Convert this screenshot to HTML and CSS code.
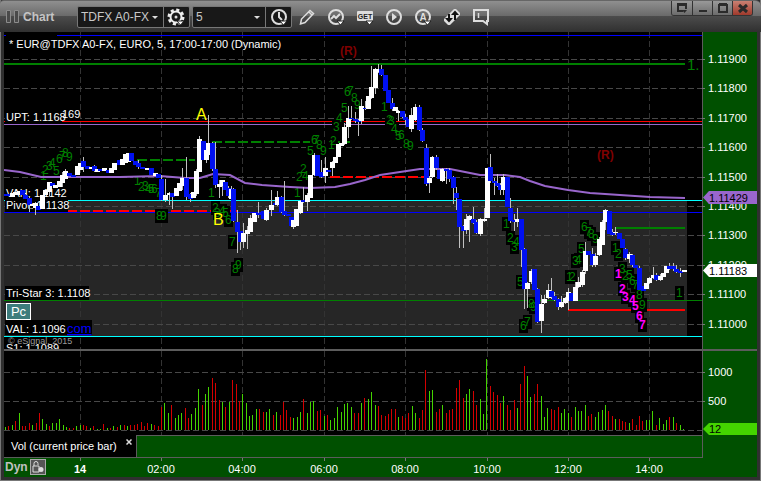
FILE: index.html
```html
<!DOCTYPE html>
<html lang="en">
<head>
    <meta charset="UTF-8">
    <meta name="viewport" content="width=device-width, initial-scale=1.0">
    <title>Chart</title>
    <link rel="stylesheet" href="styles.css">
</head>
<body>

    <div class="window">
        <header class="titlebar">
            <svg class="grip" width="14" height="14" viewBox="0 0 14 14"><path d="M.5.5h4v12h-4zM8.5.5h4v12h-4z"/></svg>
            <h1>Chart</h1>

            <div class="group symbol-group">
                <div class="picker">
                    <select aria-label="Symbol"><option>TDFX A0-FX</option></select>
                </div>
                <button type="button" aria-label="Symbol settings">
                    <svg width="20" height="20" viewBox="0 0 20 20">
                        <circle class="gear-teeth" cx="9" cy="10" r="7"/>
                        <circle class="gear-ring" cx="9" cy="10" r="5.5"/>
                        <circle class="solid" cx="9" cy="10" r="1.5"/>
                        <path class="drop" d="M10 14h7l-3.500 4z"/>
                    </svg>
                </button>
            </div>

            <div class="group interval-group">
                <div class="picker">
                    <select aria-label="Interval"><option>5</option></select>
                </div>
                <button type="button" aria-label="Time template">
                    <svg width="20" height="20" viewBox="0 0 20 20">
                        <circle class="ring" cx="10" cy="10" r="7"/>
                        <path class="ring" d="M10 5v5l3 3"/>
                        <path class="drop" d="M11 14h7l-3.500 4z"/>
                    </svg>
                </button>
            </div>

            <nav class="tools">
                <button type="button" aria-label="Draw">
                    <svg width="20" height="20" viewBox="0 0 20 20"><path class="ring thin" d="M3.500 17l1-5L13 3.500l3.500 3L8 15.500zM12 5l3 3"/></svg>
                </button>
                <button type="button" aria-label="Studies">
                    <svg width="20" height="20" viewBox="0 0 20 20">
                        <circle class="ring" cx="10" cy="10" r="7"/>
                        <path class="ring" d="M5 12l3-3 2 2 4-4"/>
                        <path class="drop" d="M11 14h7l-3.500 4z"/>
                    </svg>
                </button>
                <button type="button" aria-label="Get studies">
                    <svg width="20" height="20" viewBox="0 0 20 20">
                        <rect class="solid" x="2" y="4" width="16" height="10" rx="1"/>
                        <text class="get" x="10" y="12">GET</text>
                        <path class="drop" d="M11 14h7l-3.500 4z"/>
                    </svg>
                </button>
                <button type="button" aria-label="Play">
                    <svg width="20" height="20" viewBox="0 0 20 20"><circle class="ring" cx="10" cy="10" r="7"/><path class="solid" d="M8 6l5 4-5 4z"/></svg>
                </button>
                <button type="button" aria-label="Automatic">
                    <svg width="20" height="20" viewBox="0 0 20 20">
                        <circle class="ring" cx="10" cy="10" r="7"/>
                        <text class="auto" x="10" y="14">A</text>
                        <path class="drop" d="M11 14h7l-3.500 4z"/>
                    </svg>
                </button>
                <button type="button" aria-label="Trade">
                    <svg width="20" height="20" viewBox="0 0 20 20">
                        <path class="solid" d="M2 12L12 2h2l4 4v2L8 18H6l-4-4z"/>
                        <path class="dark" d="M6 7h2v4h3l-4 4.500L3 11h3zM12 13h2V8h3l-4-4.500L9 8h3z"/>
                    </svg>
                </button>
                <button type="button" aria-label="Notes">
                    <svg width="20" height="20" viewBox="0 0 20 20"><path class="ring" d="M3 3h14v11h-1v3l-4-3H3z"/><path class="ring thin" d="M7.500 6v5"/></svg>
                </button>
            </nav>

            <div class="window-buttons">
                <button type="button" aria-label="Dock"><svg width="12" height="12" viewBox="0 0 12 12"><path class="glyph" d="M7 9H2V2h8v5M2 3h8"/><path class="glyph-fill" d="M6 8h5l-2.500 3z"/></svg></button>
                <button type="button" aria-label="Minimize"><svg width="12" height="12" viewBox="0 0 12 12"><path class="glyph" d="M2 9h8"/></svg></button>
                <button type="button" aria-label="Maximize"><svg width="12" height="12" viewBox="0 0 12 12"><path class="glyph" d="M2 3h8v7H2zM2 2h8"/></svg></button>
                <button type="button" class="close" aria-label="Close"><svg width="12" height="12" viewBox="0 0 12 12"><path class="cross" d="M2 3l8 7M10 3l-8 7"/></svg></button>
            </div>
        </header>

        <main class="chart">
            <svg class="pane" viewBox="4 32 753 317">
                <rect x="4" y="32" width="699" height="317" fill="#000"/>
                <rect x="4" y="200" width="683" height="137" fill="#262626"/>
                <g id="priceGrid"></g>

                <path class="line blue" d="M4 35.500h2M57 35.500h645"/>
                <path class="line red" d="M4 121.500h698"/>
                <path class="line purple" d="M4 124.500h698"/>
                <path class="line cyan" d="M4 200.500h698M4 336.500h698"/>
                <path class="line green" d="M4 300.500h698"/>
                <path class="line green thick" d="M4 64h681M615 228h70"/>
                <path class="line green thick dashed" d="M137 160h58M212 142h98M330 142h20"/>
                <path class="line red thick dashed" d="M67 211h170M330 177h94"/>
                <path class="line red thick" d="M568 310h117"/>
                <path class="line blue" d="M4 212.500h698"/>
                <text class="level" x="687" y="70">1.</text>

                <g id="counts"></g>

                <g class="labels">
                    <rect x="60" y="107" width="20" height="14"/>
                    <text x="62" y="118">169</text>
                    <rect x="5" y="111" width="57" height="12"/>
                    <text x="6" y="121">UPT: 1.1168</text>
                    <rect x="5" y="186" width="63" height="13"/>
                    <text x="6" y="197">VAH: 1.1142</text>
                    <rect x="5" y="199" width="63" height="13"/>
                    <text x="6" y="209">Pivot: 1.1138</text>
                    <rect x="5" y="286" width="84" height="14"/>
                    <text x="6" y="297">Tri-Star 3: 1.1108</text>
                    <rect x="5" y="320" width="87" height="15"/>
                    <text x="6" y="333">VAL: 1.1096</text>
                    <a href="#"><text class="link" x="67" y="333">com</text></a>
                    <text class="copyright" x="8" y="344">© eSignal, 2015</text>
                    <text x="6" y="352">S1: 1.1089</text>
                    <text x="9" y="48">* EUR@TDFX A0-FX, EURO, 5, 17:00-17:00 (Dynamic)</text>
                </g>

                <path class="average" d="M4 170L20 172L41 177H120L160 176L185 178L200 178L213 174L230 175L245 183L262 185L290 187L310 188L335 187L350 184L365 180L380 175L400 172L420 169H450L465 172L480 175H505L520 177L530 181L545 186L568 190L590 193L620 195L650 197L685 198"/>
                <g id="candles"></g>
                <text class="mark" x="196" y="120">A</text>
                <text class="mark" x="213" y="225">B</text>
                <text class="ratio" x="340" y="55">(R)</text>
                <text class="ratio" x="597" y="159">(R)</text>

                <rect x="703" y="32" width="54" height="317" fill="#005000"/>
                <path class="edge" d="M702.500 32v317"/>
                <g id="priceScale" class="scale"></g>
                <path d="M703 197.500l6-6.500h48v13h-48z" fill="#9966cc"/>
                <text class="tag" x="709" y="202">1.11429</text>
                <path d="M703 270.500l6-6.500h48v13h-48z" fill="#fff"/>
                <text class="tag" x="709" y="275">1.11183</text>
            </svg>
            <button type="button" class="pc">Pc</button>

            <svg class="pane" viewBox="4 349 753 86">
                <rect x="4" y="349" width="699" height="86" fill="#000"/>
                <g id="volumeGrid"></g>
                <g id="volume"></g>
                <rect x="703" y="349" width="54" height="86" fill="#005000"/>
                <path class="edge" d="M702.500 351v84"/>
                <rect x="4" y="349" width="753" height="2" fill="#5c5c5c"/>
                <g id="volumeScale" class="scale"></g>
                <path d="M703 429l6-6h48v12h-48z" fill="#44d400"/>
                <text class="tag" x="709" y="433">12</text>
            </svg>

            <div class="tabs">
                <div class="tab">
                    <span>Vol (current price bar)</span>
                    <button type="button" aria-label="Close tab"><svg width="6" height="6" viewBox="0 0 6 6"><path d="M.5.5l5 5M5.500.5l-5 5"/></svg></button>
                </div>
                <div class="tab-rest"></div>
                <div class="tab-corner"></div>
            </div>

            <div class="time-axis">
                <svg class="pane" viewBox="4 458 753 19"><g id="timeScale" class="times"></g></svg>
                <div class="mode">
                    <span>Dyn</span>
                    <button type="button" aria-label="Lock scale">
                        <svg width="14" height="14" viewBox="0 0 14 14"><path d="M2 6h6v6H2zM3 6V3.500a2 2 0 0 1 4 0V5"/><circle cx="10" cy="9.500" r="2.500"/></svg>
                    </button>
                </div>
            </div>
        </main>
    </div>

    <script src="script.js"></script>
</body>
</html>
```

FILE: styles.css
```css
* {
    box-sizing: border-box;
}
body {
    margin: 0;
    background-color: #303030;
    font-family: "Liberation Sans", Arial, sans-serif;
    font-size: 11px;
    color: white;
}
button {
    display: flex;
    align-items: center;
    justify-content: center;
    margin: 0;
    padding: 0;
    border: none;
    background: none;
    font-family: inherit;
    color: inherit;
}
.window {
    min-height: 100vh;
    padding: 0 4px 4px;
    background-color: #303030;
    box-shadow: inset 1px -1px #777, inset -1px 0 #777;
}

/* Title bar */
.titlebar {
    display: flex;
    align-items: center;
    height: 32px;
    margin: 0 -4px;
    padding: 0 8px 0 6px;
    border-radius: 4px 6px 0 0;
    border-top: 1px solid #666;
    background: linear-gradient(#8f8f8f, #6a6a6a 15px, #4c4c4c 15px, #303030);
}
.titlebar h1 {
    width: 54px;
    margin: 0 0 0 3px;
    font-size: 12px;
    line-height: 16px;
    color: #c4c4c4;
}
.grip path {
    fill: #4a4a4a;
    stroke: #8c8c8c;
}
.group {
    display: flex;
    height: 22px;
    border: 1px solid #777;
    border-radius: 2px;
    background-color: #181818;
}
.symbol-group {
    width: 113px;
    margin-right: 2px;
}
.interval-group {
    width: 100px;
}
.picker {
    position: relative;
    flex: 1;
    border-right: 1px solid #777;
}
.picker::after {
    content: "";
    position: absolute;
    right: 5px;
    top: 9px;
    border: 3px solid transparent;
    border-top-color: #ddd;
    pointer-events: none;
}
.picker select {
    appearance: none;
    width: 100%;
    height: 20px;
    padding: 0 0 0 3px;
    border: none;
    background: none;
    font-family: inherit;
    font-size: 12px;
    color: #c8c8c8;
}
.group button {
    width: 25px;
}
.tools {
    display: flex;
    gap: 9px;
    margin-left: 5px;
}
.ring {
    fill: none;
    stroke: #ddd;
    stroke-width: 2;
}
.thin {
    stroke-width: 1.5;
}
.gear-teeth {
    fill: none;
    stroke: #eee;
    stroke-width: 3;
    stroke-dasharray: 3 2.5;
}
.gear-ring {
    fill: none;
    stroke: #eee;
    stroke-width: 2;
}
.solid {
    fill: #ddd;
}
.drop {
    fill: white;
    stroke: #222;
    stroke-width: 1;
}
.dark {
    fill: #111;
}
.get {
    font-size: 7px;
    font-weight: bold;
    text-anchor: middle;
    fill: #222;
}
.auto {
    font-size: 10px;
    font-weight: bold;
    text-anchor: middle;
    fill: #ddd;
}
.window-buttons {
    display: flex;
    align-self: flex-start;
    margin-left: auto;
    border: 1px solid #333;
    border-top: none;
    border-radius: 0 0 3px 3px;
    overflow: hidden;
}
.window-buttons button {
    width: 20px;
    height: 14px;
    background: linear-gradient(#999, #6c6c6c);
}
.window-buttons button + button {
    border-left: 1px solid #333;
}
.window-buttons .close {
    background: linear-gradient(#c98072, #a03a2c);
}
.glyph {
    fill: none;
    stroke: #2a2a2a;
    stroke-width: 2;
}
.glyph-fill {
    fill: #2a2a2a;
}
.cross {
    stroke: #2a2a2a;
    stroke-width: 3;
}

/* Chart */
.chart {
    position: relative;
    background-color: #005000;
}
.pane {
    display: block;
    width: 100%;
}
.grid {
    stroke: #484848;
    stroke-dasharray: 6 3;
}
.grid-v {
    stroke: #333;
    stroke-dasharray: 6 3;
}
.line {
    fill: none;
    stroke-width: 1;
}
.thick {
    stroke-width: 2;
}
.dashed {
    stroke-dasharray: 10 3;
}
.blue {
    stroke: #00f;
}
.red {
    stroke: #f00;
}
.purple {
    stroke: #9966cc;
}
.cyan {
    stroke: #0ff;
}
.green {
    stroke: #008000;
}
.edge {
    stroke: #5c5c5c;
}
.average {
    fill: none;
    stroke: #9966cc;
    stroke-width: 2;
}
.level {
    font-size: 15px;
    fill: #008000;
}
.labels text {
    fill: white;
}
.labels .link {
    font-size: 13px;
    fill: #00f;
    text-decoration: underline;
}
.labels .copyright {
    font-size: 9px;
    fill: #999;
}
.count {
    font-size: 12px;
    fill: #008000;
}
.count-alert {
    font-size: 12px;
    font-weight: bold;
    fill: #f0f;
}
.mark {
    font-size: 16px;
    fill: #ff0;
}
.ratio {
    font-size: 12px;
    font-weight: bold;
    fill: #800000;
}
.wick {
    stroke: #c0c0c0;
}
.up {
    fill: white;
}
.down {
    fill: #0010f0;
}
.vol-up {
    fill: #44d400;
}
.vol-down {
    fill: #d40000;
}
.scale text,
.times text {
    fill: white;
}
.scale path,
.times path {
    stroke: #777;
}
.times text {
    text-anchor: middle;
}
.times .day {
    font-weight: bold;
}
.tag {
    fill: black;
}
.pc {
    position: absolute;
    left: 2px;
    top: 271px;
    width: 25px;
    height: 17px;
    border: 1px solid white;
    background-color: #3d7c7c;
    font-size: 13px;
}

/* Study tab and time axis */
.tabs {
    display: flex;
    height: 23px;
}
.tab {
    display: flex;
    gap: 9px;
    width: 133px;
    padding: 4px 0 0 7px;
    border-right: 1px solid #5c5c5c;
    border-bottom: 1px solid #5c5c5c;
    background-color: black;
    line-height: 14px;
    white-space: nowrap;
}
.tab button {
    height: 6px;
}
.tab button path {
    stroke: #ddd;
    stroke-width: 1.5;
}
.tab-rest {
    flex: 1;
    border: solid #5c5c5c;
    border-width: 1px 1px 1px 0;
}
.tab-corner {
    width: 54px;
}
.time-axis {
    position: relative;
}
.mode {
    position: absolute;
    left: 1px;
    top: 0;
    display: flex;
    align-items: center;
    gap: 2px;
    height: 18px;
    font-size: 12px;
    font-weight: bold;
    color: #c0c0c0;
}
.mode button {
    width: 16px;
    height: 16px;
    border: 1px solid #aaa;
    background-color: #555;
}
.mode path {
    fill: none;
    stroke: #ddd;
}
.mode circle {
    fill: #ddd;
}
```

FILE: script.js
```js
// Candles: x, body top, body bottom, direction (w = up, b = down), wick top, wick bottom
const candles = `
5,194,196,b 9,194,196,b 12,193,197,w 15,192,195,w 19,191,195,w 22,190,195,b 25,195,199,b 29,198,205,b,197,212
32,204,206,w 35,203,208,w,202,215 38,206,210,b 42,195,209,w 45,190,195,w 49,182,192,w,182,196 52,183,186,b 55,185,188,w
59,181,187,w 62,175,183,w,172,187 65,171,179,w,169,179 69,173,176,b 73,175,177,b 77,166,175,w 80,163,170,w 83,161,167,b,157,172
87,166,169,b 91,167,169,w 94,166,171,b,165,172 97,169,172,w 100,169,171,b 104,168,171,w 108,170,173,b 111,168,173,w 114,163,170,w
119,160,165,b 122,159,165,w 125,154,163,w 128,153,162,w 131,153,161,b 135,161,165,b 138,163,167,b,160,169 142,167,169,b
147,168,170,w 151,168,175,b 155,173,176,w 158,174,178,b 161,179,200,b,175,201 165,195,200,w,179,202 169,193,195,w,192,205
172,193,197,b,193,209 176,188,196,w 179,183,191,w 182,178,186,w,168,190 186,178,197,b,157,200 190,194,199,b,193,202
193,192,198,w 196,171,194,w,169,196 199,139,172,w,136,172 203,141,160,b 206,150,160,w,148,163 208,143,155,w,115,155
212,143,169,b,142,171 215,169,185,b,142,188 219,184,187,w,180,198 222,180,186,w,180,196 225,182,190,b 228,188,196,b,186,198
231,189,199,w,186,199 233,189,221,b,188,222 237,222,232,b,210,253 240,231,242,b,231,250 243,233,242,w,223,248 247,230,234,w,226,249
250,218,232,w,215,232 254,213,222,w 258,213,215,b,202,218 261,213,215,b 263,211,219,b 266,210,220,w,208,221
271,205,210,w,190,216 275,203,205,b 277,197,205,w,191,206 281,197,212,b,196,213 284,211,215,b,181,216 288,214,216,b
291,217,226,b 293,220,227,w,220,229 296,209,226,w 300,201,213,w,200,214 303,200,202,b,187,203 307,195,202,w,193,211
310,175,198,w 314,155,175,w,153,176 317,155,176,b 321,172,177,b,160,178 325,168,176,w,157,183 328,170,172,b 332,162,168,w,161,176
335,157,163,w 338,144,157,w 341,143,146,w 344,127,144,w,123,145 348,118,127,w,106,138 351,118,119,b,106,120 355,119,121,b,112,123
358,120,122,b,119,136 361,106,121,w,99,124 365,108,109,b,101,110 368,96,109,w 371,87,98,w,66,99 375,69,88,w,68,94
378,69,72,w,64,73 381,69,75,b,65,76 385,75,91,b 388,90,103,b 392,103,109,b,98,111 395,107,111,w 398,111,113,w,110,121
402,111,117,b,111,118 405,117,120,b,114,125 408,119,127,b 411,115,129,w,108,132 415,107,120,w,104,121 419,107,130,b,105,131
422,130,141,b,128,142 426,148,184,b,144,186 429,178,183,w,176,193 432,157,177,w,156,178 436,157,168,b,155,170 439,170,179,b
442,169,181,w,168,182 446,169,171,b,168,184 449,170,179,b,168,182 453,177,188,b,176,204 456,193,198,b,187,210
459,199,227,b,199,248 463,226,231,b,225,248 466,219,230,w,214,234 469,216,220,w,215,242 473,219,223,b,207,224 476,222,233,b,220,234
480,219,234,w,218,236 484,219,221,w,208,222 487,168,218,w 490,167,181,b,154,183 494,181,183,b,178,195 497,183,186,b,174,187
500,185,190,b,183,195 503,177,190,w,174,195 507,177,207,b 510,208,221,b,198,223 514,220,222,b,214,231 517,219,222,w,208,227
521,219,250,b,219,267 524,249,289,b,248,309 527,283,289,w,282,308 531,271,282,w,269,284 534,269,290,b 537,289,322,b,288,323
541,304,321,w,295,333 544,299,303,w,295,304 548,290,298,w,284,299 551,291,297,b,278,299 554,296,300,b,292,301 558,299,307,b,298,310
561,302,307,w,296,308 565,298,303,w,297,304 568,292,301,w,288,310 571,293,301,b 575,287,301,w,282,301 578,282,287,w,277,288
582,272,285,w,270,287 585,251,271,w,242,274 588,251,255,b 592,254,265,b,248,267 595,256,265,w,253,267 599,239,255,w,237,256
602,222,245,w,220,245 605,210,222,w,209,230 609,211,234,b 612,232,235,b,229,236 615,232,233,w,227,235 619,233,239,b
622,239,248,b 625,249,258,b,248,260 629,254,259,w,252,263 632,255,265,b,254,267 635,265,268,b 639,268,290,b,266,290
643,286,291,b 646,283,289,w 649,278,283,w,277,284 653,275,278,w,267,279 656,275,280,b,273,281 660,276,280,w,274,281
663,273,277,w 666,266,273,w 669,266,269,b,263,270 673,266,269,b,263,271 676,269,272,b,265,273 680,271,273,b,268,277 684,270,272,w`;

// Volume bars: height and direction, one per five minutes
const volume = `
3g 4r 5g 9r 17g 4r 4r 7r 5g 7r 17r 11g 6g 4r 7g 7g 11g 5g 3g 2r 2r 4g 5g 5r 4r 2g 4r 1g 1g 6r 2g 2r 4g 3r 5g 5r 4g 5r 5r 6r
8r 4r 7r 6g 5r 4r 23r 27g 17g 25r 12g 15g 17g 22r 12r 16g 22g 41g 25r 36g 43g 52r 47r 30r 28g 23r 28g 50r 46r 29r 36g 27g 14g 15g 21g 21r 18r 18g 21g 15r
18g 15r 28r 20r 13r 12g 13g 18g 31r 17g 28g 29g 19r 20r 14g 15r 10g 12g 23g 18g 26g 27g 23g 17r 17r 27g 32r 31g 38g 25g 24r 15r 14r 16r 21r 21r 13g 14r 12r 17r
24g 17g 12r 20r 60r 39g 40g 18r 21r 25g 17r 20r 21r 42r 50r 32r 36g 41g 39r 25r 31g 16g 71g 44r 38r 35r 27r 34g 25r 20r 30r 22g 46r 64r 54g 33g 36r 46r 34g 13g
22g 21r 20r 23r 17g 21g 17g 13r 23g 19g 19g 25g 14r 16r 13g 18g 20g 25g 19r 14r 11g 11r 9r 8r 7g 11r 5r 14r 9r 10g 10g 19g 5r 12g 6g 10g 13r 13g 7r 5g 1g`;

// Bar counts: digit, x, baseline
const counts = `
2,42,174 1,40,180 3,46,170 4,49,167 5,53,175 6,56,163 7,59,160 8,62,157 9,66,161 1,134,185 2,138,191 3,142,190 4,145,193 5,148,193
6,151,193 7,155,197 8,156,220 9,160,220 1,208,197 2,212,212 3,214,217 4,219,215 5,222,217 6,225,224 7,229,246 8,232,273 9,235,269
1,294,197 2,296,181 2,300,173 4,302,180 5,307,155 6,311,144 7,313,144 8,316,149 9,320,155 2,330,145 3,333,131 4,336,122 1,328,149
5,341,112 6,344,96 7,347,95 8,351,102 9,354,109 1,381,111 2,386,124 3,388,125 4,391,133 5,395,140 6,398,139 8,403,148 9,407,150
1,503,228 2,507,242 3,511,251 4,513,246 5,517,286 8,528,308 9,530,311 6,520,330 7,524,326
1,566,281 2,569,281 3,572,265 4,575,264 5,578,253 6,581,231 7,585,236 8,588,238 9,592,243
1,612,252 2,615,258 3,619,273 2,622,280 5,626,279 6,629,285 7,632,289 8,636,299 9,639,309 1,676,297`;

const alerts = "1,615,278 2,619,293 3,622,301 4,629,304 5,632,310 6,636,320 7,639,329";

const hours = [[80, "14"], [161, "02:00"], [242, "04:00"], [324, "06:00"], [405, "08:00"], [487, "10:00"], [568, "12:00"], [649, "14:00"]];
const prices = ["1.11900", "1.11800", "1.11700", "1.11600", "1.11500", "1.11400", "1.11300", "1.11200", "1.11100", "1.11000"];

function fill(id, markup) {
    document.getElementById(id).innerHTML = markup;
}

function parse(text) {
    return text.trim().split(/\s+/).map(item => item.split(","));
}

function priceY(i) {
    return 59 + Math.round(i * 29.4);
}

function drawGrid(id, top, bottom, rows) {
    const vertical = hours.map(([x]) => `<path class="grid-v" d="M${x + 0.5} ${top}V${bottom}"/>`);
    const horizontal = rows.map(y => `<path class="grid" d="M4 ${y + 0.5}H702"/>`);
    fill(id, vertical.join("") + horizontal.join(""));
}

function drawCandles() {
    fill("candles", parse(candles).map(([x, top, bottom, dir, high, low]) => {
        const wick = high ? `<path class="wick" d="M${+x + 0.5} ${high}V${low}"/>` : "";
        return wick + `<rect class="${dir === "w" ? "up" : "down"}" x="${x - 2}" y="${top}" width="5" height="${bottom - top}"/>`;
    }).join(""));
}

function drawVolume() {
    fill("volume", volume.trim().split(/\s+/).map((bar, i) => {
        const height = parseInt(bar);
        const x = Math.round(5 + i * 3.39);
        return `<rect class="${bar.endsWith("g") ? "vol-up" : "vol-down"}" x="${x}" y="${430 - height}" width="1" height="${height}"/>`;
    }).join(""));
}

function drawCounts() {
    const normal = parse(counts);
    const boxes = normal.concat(parse(alerts)).map(([, x, y]) => `<rect x="${x - 1}" y="${y - 11}" width="9" height="14"/>`);
    const digits = normal.map(([n, x, y]) => `<text class="count" x="${x}" y="${y}">${n}</text>`);
    const marked = parse(alerts).map(([n, x, y]) => `<text class="count-alert" x="${x}" y="${y}">${n}</text>`);
    fill("counts", boxes.join("") + digits.join("") + marked.join(""));
}

function drawScales() {
    fill("priceScale", prices.map((price, i) =>
        `<path d="M702 ${priceY(i) + 0.5}h3"/><text x="708" y="${priceY(i) + 4}">${price}</text>`).join(""));
    fill("volumeScale", [[372, "1000"], [401, "500"]].map(([y, label]) =>
        `<path d="M702 ${y + 0.5}h3"/><text x="708" y="${y + 4}">${label}</text>`).join(""));
    fill("timeScale", hours.map(([x, label], i) =>
        `<path d="M${x + 0.5} 458v3"/><text class="${i ? "hour" : "day"}" x="${x}" y="473">${label}</text>`).join(""));
}

drawGrid("priceGrid", 32, 349, prices.map((price, i) => priceY(i)));
drawGrid("volumeGrid", 351, 435, [372, 401, 430]);
drawCandles();
drawVolume();
drawCounts();
drawScales();
```
